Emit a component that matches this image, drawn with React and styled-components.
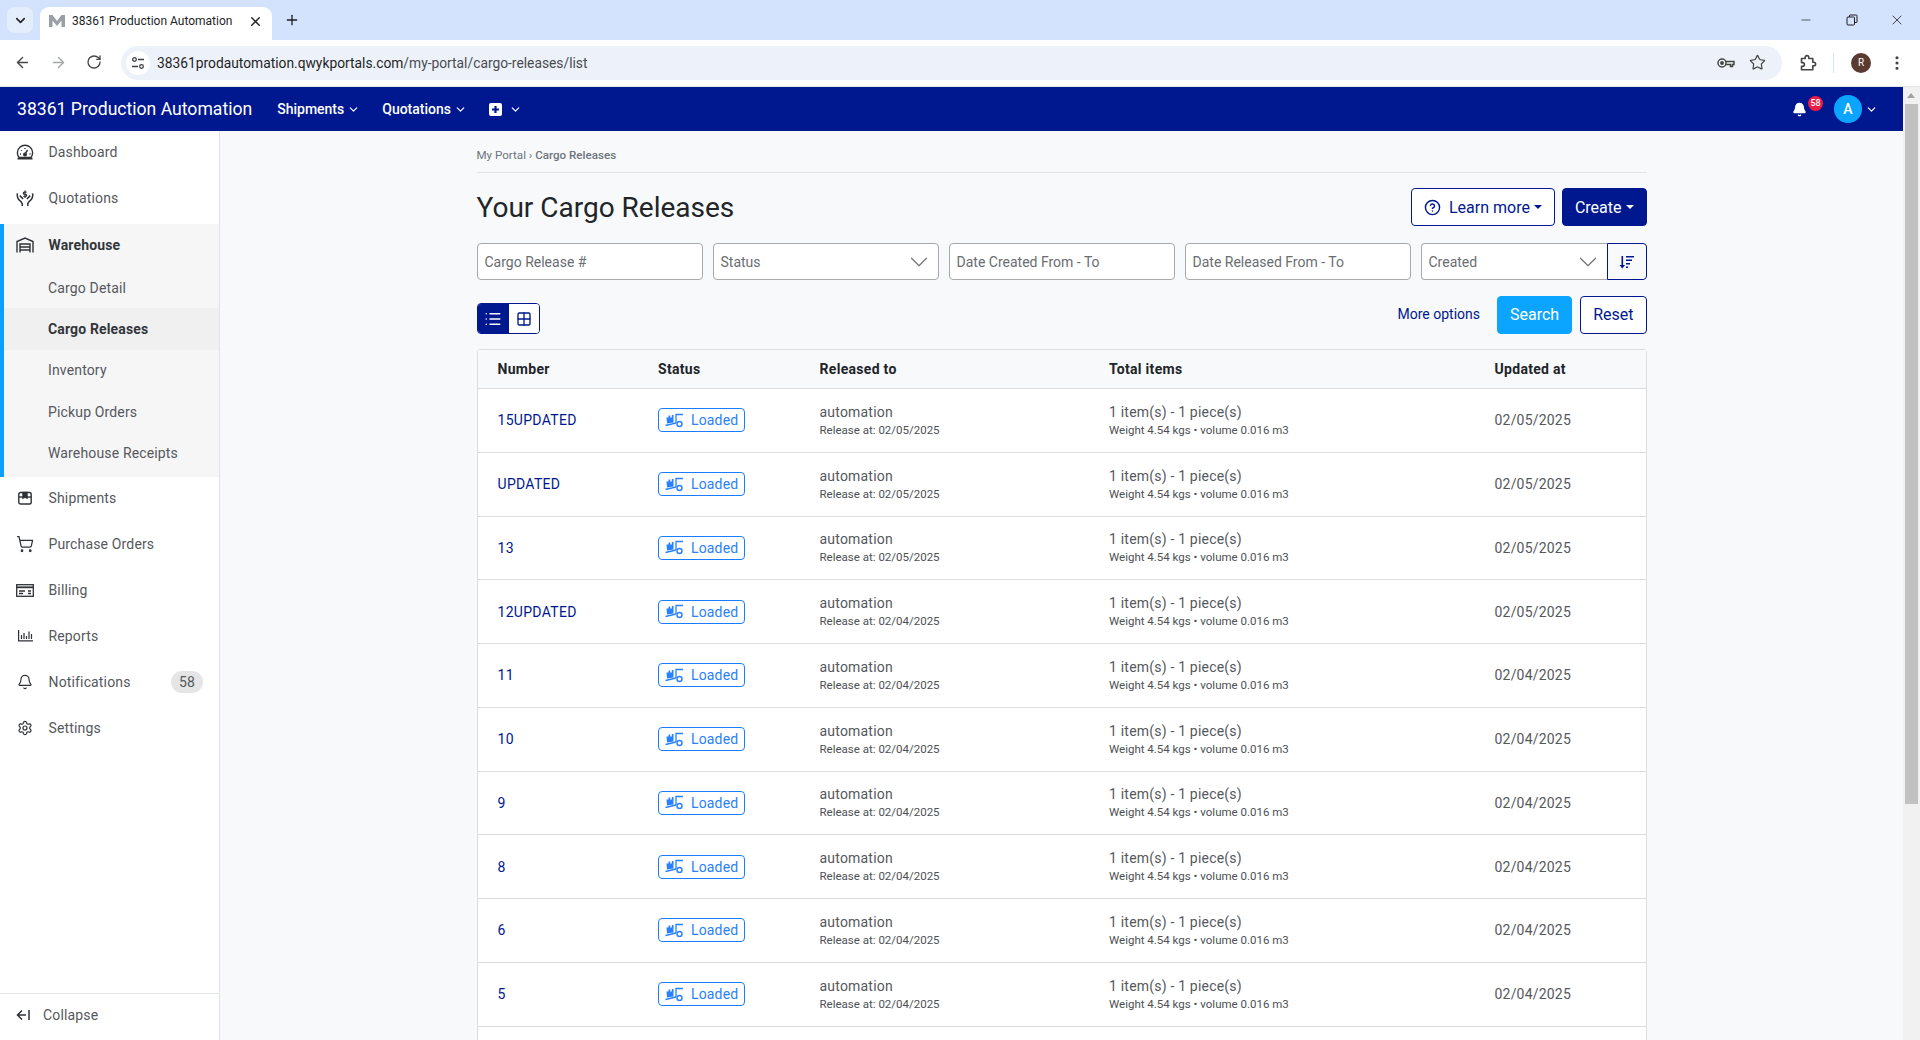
import React from 'react'
import styled, { createGlobalStyle } from 'styled-components'
import { ArrowLeft, ArrowRight, RotateCw, Star, X, Plus, ChevronDown, Minus, EllipsisVertical, Bell, ShoppingCart, Settings, List, Grid2x2, CircleHelp } from 'lucide-react'

const GlobalStyle = createGlobalStyle`
  * { box-sizing: border-box; }
  html, body {
    margin: 0;
    height: 100%;
    overflow: hidden;
    font-family: Roboto, "Liberation Sans", sans-serif;
  }
`

const Frame = styled.div`
  display: flex;
  flex-direction: column;
  width: 1920px;
  height: 1040px;
  overflow: hidden;
  background: #f8f9fb;
`

const TabStrip = styled.div`
  display: flex;
  align-items: flex-end;
  height: 40px;
  padding-left: 7px;
  background: #d3e3fd;
  color: #1f1f1f;
`

const TabSearch = styled.div`
  display: flex;
  align-items: center;
  justify-content: center;
  width: 26px;
  height: 26px;
  margin: 0 7px 7px 0;
  border-radius: 8px;
  background: #e4edfc;
`

const Tab = styled.div`
  display: flex;
  align-items: center;
  width: 232px;
  height: 33px;
  padding: 0 9px 5px;
  border-radius: 9px 9px 0 0;
  background: #fff;
  font-size: 12px;
`

const TabLogo = styled.span`
  display: flex;
  width: 23px;
`

const TabTitle = styled.span`
  flex: 1;
`

const NewTab = styled.div`
  display: flex;
  align-items: center;
  margin: 0 0 12px 12px;
`

const WindowControls = styled.div`
  display: flex;
  align-items: center;
  gap: 31px;
  margin: 0 15px 12px auto;
`

const MinimizeIcon = styled(Minus)`
  margin-right: 2.5px;
`

const Toolbar = styled.div`
  display: flex;
  align-items: center;
  height: 47px;
  padding: 0 0 1px 14px;
  background: #fff;
  border-bottom: 1px solid #e3e5e8;
  color: #444746;
`

const NavIcons = styled.div`
  display: flex;
  gap: 19px;
  width: 107px;
`

const AddressBar = styled.div`
  display: flex;
  align-items: center;
  width: 1661px;
  height: 34px;
  padding: 0 16px 0 5px;
  border-radius: 17px;
  background: #edf2fa;
`

const SiteIcon = styled.span`
  display: flex;
  align-items: center;
  justify-content: center;
  width: 24px;
  height: 24px;
  margin-right: 7px;
  border-radius: 50%;
  background: #fff;
`

const Url = styled.span`
  flex: 1;
  font-size: 13.8px;
  color: #1f1f1f;

  em {
    font-style: normal;
    color: #4a4c50;
  }
`

const AddressIcons = styled.div`
  display: flex;
  align-items: center;
  gap: 14px;
`

const ToolbarEnd = styled.div`
  display: flex;
  align-items: center;
  margin-left: 17px;
`

const ToolbarDivider = styled.span`
  width: 1px;
  height: 20px;
  margin: 0 17px 0 16px;
  background: #d3e3fd;
`

const ProfileDot = styled.span`
  display: flex;
  align-items: center;
  justify-content: center;
  width: 20px;
  height: 20px;
  margin-right: 17px;
  border-radius: 50%;
  background: #5b3a32;
  color: #fff;
  font-size: 10px;
`

const Viewport = styled.div`
  display: flex;
  flex: 1;
  min-height: 0;
`

const PageColumn = styled.div`
  display: flex;
  flex-direction: column;
  flex: 1;
  min-width: 0;
`

const TopBar = styled.header`
  display: flex;
  align-items: center;
  flex: none;
  height: 44px;
  padding: 0 25px 0 17px;
  background: #00188f;
  color: #fff;
`

const Brand = styled.span`
  margin: 0 25px 1px 0;
  font-size: 17.6px;
  font-weight: 400;
`

const TopLink = styled.span`
  display: flex;
  align-items: center;
  gap: 3px;
  margin-right: 22px;
  font-size: 14px;
  font-weight: 500;
`

const TopRight = styled.div`
  display: flex;
  align-items: center;
  margin-left: auto;
`

const BellWrap = styled.span`
  position: relative;
  display: flex;
  margin-right: 27px;
`

const RedBadge = styled.span`
  position: absolute;
  top: -6px;
  left: 16px;
  min-width: 15px;
  height: 15px;
  border-radius: 8px;
  background: #ee1c43;
  color: #fff;
  font-size: 9px;
  font-weight: 500;
  line-height: 15px;
  text-align: center;
`

const UserDot = styled.span`
  display: flex;
  align-items: center;
  justify-content: center;
  width: 28px;
  height: 28px;
  margin-right: 3px;
  border-radius: 50%;
  background: #0ba5ff;
  font-size: 14px;
  font-weight: 500;
`

const Body = styled.div`
  display: flex;
  flex: 1;
  min-height: 0;
`

const Sidebar = styled.aside`
  display: flex;
  flex-direction: column;
  flex: none;
  width: 220px;
  background: #fff;
  border-right: 1px solid #e2e3e6;
  color: #55585c;
  font-size: 14px;
  letter-spacing: 0.15px;
`

const SideNav = styled.nav`
  display: flex;
  flex-direction: column;
  flex: 1;
  gap: 4px;
`

const SideItem = styled.div`
  display: flex;
  align-items: center;
  flex: none;
  height: 42px;
  padding: ${(p) => (p.$active ? '0 14px 0 12px' : '0 16px 0 16px')};
  color: ${(p) => (p.$active ? '#33363a' : 'inherit')};
  font-weight: ${(p) => (p.$active ? 700 : 400)};
`

const SideIcon = styled.span`
  display: flex;
  justify-content: center;
  width: 18px;
  margin-right: 14.5px;
  color: #2f3236;
`

const SideGroup = styled.div`
  display: flex;
  flex-direction: column;
  flex: none;
  height: 253px;
  margin: 1px 0 -4px;
  border-left: 4px solid #0ba0ff;
  background: #f6f6f7;
`

const SubList = styled.div`
  display: flex;
  flex-direction: column;
  padding-top: 1px;
`

const SubItem = styled.div`
  display: flex;
  align-items: center;
  height: 41.3px;
  padding-left: 44px;
  background: ${(p) => (p.$active ? '#f0f0f1' : 'transparent')};
  color: ${(p) => (p.$active ? '#33363a' : 'inherit')};
  font-weight: ${(p) => (p.$active ? 700 : 400)};
`

const CountPill = styled.span`
  margin-left: auto;
  width: 32px;
  height: 22px;
  border-radius: 11px;
  background: #e5e5e5;
  line-height: 22px;
  text-align: center;
`

const CollapseRow = styled.div`
  display: flex;
  align-items: center;
  flex: none;
  height: 47px;
  padding: 0 0 4px 16px;
  border-top: 1px solid #e2e3e6;
`

const CollapseIcon = styled.span`
  display: flex;
  margin-right: 13px;
  color: #2f3236;
`

const Main = styled.main`
  flex: 1;
  min-width: 0;
  overflow: hidden;
`

const Container = styled.div`
  width: 1170px;
  margin: 0 auto;
  padding-top: 16px;
`

const Breadcrumb = styled.div`
  height: 26px;
  border-bottom: 1px solid #e2e4e8;
  color: #6c757d;
  font-size: 11.6px;
  line-height: 16px;

  b {
    font-weight: 500;
  }
`

const TitleRow = styled.div`
  display: flex;
  align-items: center;
  justify-content: space-between;
  margin-top: 15px;
`

const Title = styled.h1`
  margin: 0;
  color: #212529;
  font-size: 28px;
  font-weight: 400;
`

const Actions = styled.div`
  display: flex;
  gap: 7px;
`

const Button = styled.span`
  display: inline-flex;
  align-items: center;
  height: 38px;
  padding: 0 12px;
  border: 1px solid ${(p) => p.$fill || '#00188f'};
  border-radius: 4px;
  background: ${(p) => p.$fill || '#fff'};
  color: ${(p) => (p.$fill ? '#fff' : '#00188f')};
  font-size: 16px;
`

const HelpIcon = styled(CircleHelp)`
  margin-right: 8px;
`

const Caret = styled.i`
  width: 0;
  height: 0;
  margin-left: 4px;
  border-top: 4px solid currentColor;
  border-left: 4px solid transparent;
  border-right: 4px solid transparent;
`

const FilterRow = styled.div`
  display: grid;
  grid-template-columns: repeat(5, 226px);
  gap: 10px;
  margin-top: 17px;
`

const Field = styled.div`
  display: flex;
  align-items: center;
  justify-content: space-between;
  height: 37px;
  padding: 0 7px;
  border: 1px solid #a9a9a9;
  border-radius: 4px;
  background: #fff;
  color: #6a6d72;
  font-size: 14px;
`

const FieldChevron = styled(ChevronDown)`
  margin-right: -3px;
  color: #777;
`

const SortField = styled.div`
  display: flex;
`

const SortSelect = styled(Field)`
  flex: 1;
  border-right: 0;
  border-radius: 4px 0 0 4px;
`

const SortButton = styled.span`
  display: flex;
  align-items: center;
  justify-content: center;
  width: 40px;
  height: 37px;
  border: 1px solid #00188f;
  border-radius: 0 4px 4px 0;
  background: #f8f9fb;
  color: #00188f;
`

const OptionsRow = styled.div`
  display: flex;
  align-items: center;
  margin-top: 15px;
`

const ViewToggle = styled.div`
  display: flex;
  height: 31px;
  margin-top: 8px;
  overflow: hidden;
  border: 1px solid #00188f;
  border-radius: 4px;
`

const ViewButton = styled.span`
  display: flex;
  align-items: center;
  justify-content: center;
  width: ${(p) => (p.$active ? 31 : 30)}px;
  background: ${(p) => (p.$active ? '#00188f' : '#fff')};
  color: ${(p) => (p.$active ? '#fff' : '#00188f')};
`

const OptionsRight = styled.div`
  display: flex;
  align-items: center;
  gap: 8px;
  margin-left: auto;
`

const MoreLink = styled.span`
  margin: 0 9px 1px 0;
  color: #00188f;
  font-size: 14px;
`

const Table = styled.div`
  margin-top: 15px;
  padding-bottom: 30px;
  border: 1px solid #dcdddf;
  border-bottom: 0;
  border-radius: 4px 4px 0 0;
  background: #fff;
`

const Row = styled.div`
  display: grid;
  grid-template-columns: 160.5px 161.5px 289.5px 385.5px 1fr;
  align-items: center;
  height: 63.75px;
  padding-left: 20px;
  border-bottom: 1px solid #dcdddf;
  color: #55585c;
  font-size: 14px;
`

const HeadRow = styled(Row)`
  height: 39px;
  background: #f8f9fb;
  color: #212529;
  font-weight: 700;
  letter-spacing: 0.3px;
`

const NumberLink = styled.span`
  color: #00188f;
  letter-spacing: 0.3px;
`

const StatusBadge = styled.span`
  display: inline-flex;
  align-items: center;
  gap: 6px;
  width: 87px;
  height: 24px;
  padding-left: 6px;
  border: 1px solid #1a7dff;
  border-radius: 4px;
  color: #2a80ff;
  letter-spacing: 0.15px;
`

const Stack = styled.div`
  display: flex;
  flex-direction: column;
  gap: 3px;
  letter-spacing: 0.2px;

  small {
    color: #4d5054;
    font-size: 11.5px;
    letter-spacing: 0;
  }
`

const UpdatedAt = styled.span`
  letter-spacing: 0.2px;
`

const ScrollTrack = styled.div`
  position: relative;
  flex: none;
  width: 17px;
  background: #f1f1f1;
`

const ScrollArrow = styled.i`
  position: absolute;
  top: 6px;
  left: 4px;
  border-bottom: 5px solid #a3a3a3;
  border-left: 4.5px solid transparent;
  border-right: 4.5px solid transparent;
`

const ScrollThumb = styled.div`
  position: absolute;
  top: 17px;
  left: 2px;
  width: 13px;
  height: 700px;
  background: #c1c1c1;
`

const PlusChevron = styled(ChevronDown)`
  margin-left: 4px;
`

const TabFavicon = () => (
  <svg width="16" height="12" viewBox="0 0 16 12" fill="#9a9fa6">
    <path d="M0 12V0h3.5L8 6l4.5-6H16v12h-3.5V5.5L8 11 3.5 5.5V12Z" />
  </svg>
)

const GaugeIcon = () => (
  <svg width="18" height="16" viewBox="0 0 18 16" fill="none" stroke="currentColor" strokeWidth="1.4">
    <path d="M3 13.5A7.6 7.6 0 1 1 15 13.5Z" />
    <path d="M1.5 14.6h15" strokeWidth="1.8" />
    <path d="M9 10l2.6-4" />
    <circle cx="9" cy="10.5" r="1.3" fill="currentColor" />
    <path d="M5 6.2l.6.6M4 10h1M9 4v1M13.5 10h1" />
  </svg>
)

const QuoteIcon = () => (
  <svg width="19" height="17" viewBox="0 0 19 17" fill="none" stroke="currentColor" strokeWidth="1.6">
    <path d="M1.5 3C0.8 7 2 9.5 5 11.5l1.6 2.5v2.5" />
    <path d="M17.5 3c.7 4-.5 6.5-3.5 8.5L12.4 14v2.5" />
    <path d="M4 5.5L7.5 9M15 5.5L11.5 9" />
    <path d="M9.5 0v8M11.2 1.8H8.8a1.1 1.1 0 0 0 0 2.2h1.4a1.1 1.1 0 0 1 0 2.2H7.8" strokeWidth="1.2" />
  </svg>
)

const WarehouseIcon = () => (
  <svg width="18" height="16" viewBox="0 0 18 16" fill="none" stroke="currentColor" strokeWidth="1.4">
    <path d="M1 15.5V4.5L9 1l8 3.5v11" />
    <path d="M4 15.5V7h10v8.5M4 10h10M4 13h10" />
  </svg>
)

const BoxIcon = () => (
  <svg width="14" height="14" viewBox="0 0 14 14" fill="none" stroke="currentColor" strokeWidth="1.4">
    <rect x="0.8" y="1.5" width="12.4" height="11.5" rx="1.8" />
    <path d="M1 6h12" />
    <path d="M5 1.5h4V7L7 6 5 7Z" fill="currentColor" />
  </svg>
)

const BillingIcon = () => (
  <svg width="18" height="13" viewBox="0 0 18 13" fill="none" stroke="currentColor" strokeWidth="1.3">
    <rect x="0.7" y="0.7" width="16.6" height="11.6" />
    <path d="M1 3.3h16" strokeWidth="1.8" />
    <path d="M3 7h6M3 9.5h4M12 7h3M12 9.5h3" />
  </svg>
)

const ChartIcon = () => (
  <svg width="15" height="12" viewBox="0 0 15 12" fill="none" stroke="currentColor" strokeWidth="1.2">
    <path d="M0.6 0v10.8H15" />
    <path d="M3.5 5v4M6 3v6M8.5 6v3M11 1.5V9M13.5 4v5" />
  </svg>
)

const CollapseArrow = () => (
  <svg width="14" height="12" viewBox="0 0 14 12" fill="none" stroke="currentColor" strokeWidth="1.5">
    <path d="M6 1.5L1.5 6 6 10.5M1.5 6H10M13 1v10" />
  </svg>
)

const LoadedIcon = () => (
  <svg width="20" height="15" viewBox="0 0 20 15" fill="none" stroke="currentColor">
    <path d="M1.5 4.5h2V2.5h1.7v2h1.6V2h1.7v7.5l-6.5 1Z" fill="currentColor" stroke="none" />
    <path d="M0.5 12.5L11 10M11 10V1.5h7" strokeWidth="1.3" />
    <circle cx="14.5" cy="11" r="2.5" strokeWidth="1.4" />
  </svg>
)

const SortIcon = () => (
  <svg width="15" height="14" viewBox="0 0 15 14" fill="currentColor">
    <path d="M2.5 1h1.6v9h2L3.3 13.5 0.5 10h2Z" />
    <path d="M7 1h8v1.6H7zM7 4.5h6v1.6H7zM7 8h4v1.6H7zM7 11.5h2v1.6H7z" />
  </svg>
)

const TuneIcon = () => (
  <svg width="14" height="14" viewBox="0 0 14 14" fill="none" stroke="#3c4043" strokeWidth="1.3">
    <circle cx="3.5" cy="3.5" r="1.8" />
    <path d="M7 3.5h6M1 10.5h6" />
    <circle cx="10.5" cy="10.5" r="1.8" />
  </svg>
)

const KeyIcon = () => (
  <svg width="18" height="12" viewBox="0 0 18 12" fill="none" stroke="#444746" strokeWidth="1.5">
    <circle cx="5" cy="6" r="4" />
    <circle cx="5" cy="6" r="1.2" fill="#444746" />
    <path d="M9 4.5h8v3h-1.5v2h-2v-2H9" />
  </svg>
)

const ExtensionIcon = () => (
  <svg width="18" height="18" viewBox="0 0 18 18" fill="none" stroke="#444746" strokeWidth="1.6" strokeLinejoin="round">
    <path d="M2.5 4.5h3.7V3.4a1.8 1.8 0 0 1 3.6 0v1.1h4v3.7h1a1.8 1.8 0 0 1 0 3.6h-1v4H2.500v-3.400h1a1.900 1.900 0 0 0 0-3.800h-1Z" />
  </svg>
)

const RestoreIcon = () => (
  <svg width="12" height="12" viewBox="0 0 12 12" fill="none" stroke="#1f1f1f">
    <rect x="1" y="3" width="7.5" height="8" rx="1" />
    <path d="M3.5 3V1.5A.5.5 0 0 1 4 1h6.500a.5.5 0 0 1 .5.5V8a.5.5 0 0 1-.5.5H8.500" />
  </svg>
)

const PlusBox = () => (
  <svg width="13" height="13" viewBox="0 0 13 13">
    <rect width="13" height="13" rx="2" fill="#fff" />
    <path d="M6.5 3v7M3 6.5h7" stroke="#00188f" strokeWidth="2.2" />
  </svg>
)

const rows = [
  ['15UPDATED', '02/05/2025', '02/05/2025'],
  ['UPDATED', '02/05/2025', '02/05/2025'],
  ['13', '02/05/2025', '02/05/2025'],
  ['12UPDATED', '02/04/2025', '02/05/2025'],
  ['11', '02/04/2025', '02/04/2025'],
  ['10', '02/04/2025', '02/04/2025'],
  ['9', '02/04/2025', '02/04/2025'],
  ['8', '02/04/2025', '02/04/2025'],
  ['6', '02/04/2025', '02/04/2025'],
  ['5', '02/04/2025', '02/04/2025'],
]

const App = () => {
  return (
    <Frame>
      <GlobalStyle />
      <TabStrip>
        <TabSearch><ChevronDown size={15} strokeWidth={2.5} /></TabSearch>
        <Tab>
          <TabLogo><TabFavicon /></TabLogo>
          <TabTitle>38361 Production Automation</TabTitle>
          <X size={15} strokeWidth={2.2} />
        </Tab>
        <NewTab><Plus size={16} /></NewTab>
        <WindowControls>
          <MinimizeIcon size={14} strokeWidth={1.2} />
          <RestoreIcon />
          <X size={16} strokeWidth={1.2} />
        </WindowControls>
      </TabStrip>
      <Toolbar>
        <NavIcons>
          <ArrowLeft size={17} strokeWidth={2} />
          <ArrowRight size={17} strokeWidth={2} color="#a4a6a8" />
          <RotateCw size={16} strokeWidth={2} />
        </NavIcons>
        <AddressBar>
          <SiteIcon><TuneIcon /></SiteIcon>
          <Url>38361prodautomation.qwykportals.com<em>/my-portal/cargo-releases/list</em></Url>
          <AddressIcons>
            <KeyIcon />
            <Star size={17} strokeWidth={1.7} />
          </AddressIcons>
        </AddressBar>
        <ToolbarEnd>
          <ExtensionIcon />
          <ToolbarDivider />
          <ProfileDot>R</ProfileDot>
          <EllipsisVertical size={18} strokeWidth={2.2} />
        </ToolbarEnd>
      </Toolbar>
      <Viewport>
        <PageColumn>
          <TopBar>
            <Brand>38361 Production Automation</Brand>
            <TopLink>Shipments <ChevronDown size={13} strokeWidth={2.2} /></TopLink>
            <TopLink>Quotations <ChevronDown size={13} strokeWidth={2.2} /></TopLink>
            <TopLink><PlusBox /> <PlusChevron size={13} strokeWidth={2.2} /></TopLink>
            <TopRight>
              <BellWrap>
                <Bell size={15} fill="#fff" />
                <RedBadge>58</RedBadge>
              </BellWrap>
              <UserDot>A</UserDot>
              <ChevronDown size={13} strokeWidth={2.2} />
            </TopRight>
          </TopBar>
          <Body>
            <Sidebar>
              <SideNav>
                <SideItem><SideIcon><GaugeIcon /></SideIcon>Dashboard</SideItem>
                <SideItem><SideIcon><QuoteIcon /></SideIcon>Quotations</SideItem>
                <SideGroup>
                  <SideItem $active><SideIcon><WarehouseIcon /></SideIcon>Warehouse</SideItem>
                  <SubList>
                    <SubItem>Cargo Detail</SubItem>
                    <SubItem $active>Cargo Releases</SubItem>
                    <SubItem>Inventory</SubItem>
                    <SubItem>Pickup Orders</SubItem>
                    <SubItem>Warehouse Receipts</SubItem>
                  </SubList>
                </SideGroup>
                <SideItem><SideIcon><BoxIcon /></SideIcon>Shipments</SideItem>
                <SideItem><SideIcon><ShoppingCart size={18} strokeWidth={1.7} /></SideIcon>Purchase Orders</SideItem>
                <SideItem><SideIcon><BillingIcon /></SideIcon>Billing</SideItem>
                <SideItem><SideIcon><ChartIcon /></SideIcon>Reports</SideItem>
                <SideItem><SideIcon><Bell size={16} strokeWidth={1.8} /></SideIcon>Notifications<CountPill>58</CountPill></SideItem>
                <SideItem><SideIcon><Settings size={16} strokeWidth={1.8} /></SideIcon>Settings</SideItem>
              </SideNav>
              <CollapseRow>
                <CollapseIcon><CollapseArrow /></CollapseIcon>
                Collapse
              </CollapseRow>
            </Sidebar>
            <Main>
              <Container>
                <Breadcrumb>My Portal › <b>Cargo Releases</b></Breadcrumb>
                <TitleRow>
                  <Title>Your Cargo Releases</Title>
                  <Actions>
                    <Button>
                      <HelpIcon size={17} strokeWidth={2} />
                      Learn more<Caret />
                    </Button>
                    <Button $fill="#00188f">Create<Caret /></Button>
                  </Actions>
                </TitleRow>
                <FilterRow>
                  <Field>Cargo Release #</Field>
                  <Field>Status<FieldChevron size={30} strokeWidth={1} /></Field>
                  <Field>Date Created From - To</Field>
                  <Field>Date Released From - To</Field>
                  <SortField>
                    <SortSelect>Created<FieldChevron size={30} strokeWidth={1} /></SortSelect>
                    <SortButton><SortIcon /></SortButton>
                  </SortField>
                </FilterRow>
                <OptionsRow>
                  <ViewToggle>
                    <ViewButton $active><List size={18} strokeWidth={2} /></ViewButton>
                    <ViewButton><Grid2x2 size={16} strokeWidth={2} /></ViewButton>
                  </ViewToggle>
                  <OptionsRight>
                    <MoreLink>More options</MoreLink>
                    <Button $fill="#0ba5ff">Search</Button>
                    <Button>Reset</Button>
                  </OptionsRight>
                </OptionsRow>
                <Table>
                  <HeadRow>
                    <span>Number</span>
                    <span>Status</span>
                    <span>Released to</span>
                    <span>Total items</span>
                    <span>Updated at</span>
                  </HeadRow>
                  {rows.map(([number, released, updated]) => (
                    <Row key={number}>
                      <NumberLink>{number}</NumberLink>
                      <span><StatusBadge><LoadedIcon />Loaded</StatusBadge></span>
                      <Stack>
                        <span>automation</span>
                        <small>Release at: {released}</small>
                      </Stack>
                      <Stack>
                        <span>1 item(s) - 1 piece(s)</span>
                        <small>Weight 4.54 kgs • volume 0.016 m3</small>
                      </Stack>
                      <UpdatedAt>{updated}</UpdatedAt>
                    </Row>
                  ))}
                </Table>
              </Container>
            </Main>
          </Body>
        </PageColumn>
        <ScrollTrack>
          <ScrollArrow />
          <ScrollThumb />
        </ScrollTrack>
      </Viewport>
    </Frame>
  )
}

export default App
